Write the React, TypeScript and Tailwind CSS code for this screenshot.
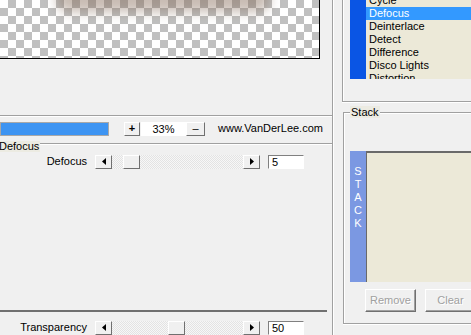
import React from "react";

const raised =
  "border border-t-white border-l-white border-r-[#707070] border-b-[#707070] bg-[#f0f0f0]";
const sunken =
  "border border-t-[#808080] border-l-[#808080] border-r-white border-b-white bg-white";

const effects = [
  "Cycle",
  "Defocus",
  "Deinterlace",
  "Detect",
  "Difference",
  "Disco Lights",
  "Distortion",
];

function ArrowButton({ dir }: { dir: "left" | "right" }) {
  return (
    <div className={`${raised} w-[17px] h-[14px] flex items-center justify-center shrink-0`}>
      <svg width="4" height="7" viewBox="0 0 4 7">
        {dir === "left" ? <path d="M4 0V7L0 3.5Z" fill="#000" /> : <path d="M0 0V7L4 3.5Z" fill="#000" />}
      </svg>
    </div>
  );
}

function SliderRow({ label, value, thumb }: { label: string; value: string; thumb: number }) {
  return (
    <div className="flex items-center h-[15px]">
      <div className="w-[88px] text-right pr-[1px] leading-none">{label}</div>
      <div className="ml-[7px] flex items-center">
        <ArrowButton dir="left" />
        <div className="w-[131px] h-[14px] flex items-center bg-[repeating-conic-gradient(#e3e3e3_0%_25%,#f7f7f7_0%_50%)] [background-size:2px_2px]">
          <div className={`${raised} h-[14px] w-[17px]`} style={{ marginLeft: thumb }} />
        </div>
        <ArrowButton dir="right" />
      </div>
      <div className={`${sunken} ml-[8px] w-[36px] h-[14px] pl-[3px] leading-[12px]`}>{value}</div>
    </div>
  );
}

const App: React.FC = () => {
  return (
    <div className="w-[471px] h-[335px] overflow-hidden bg-[#f0f0f0] flex text-[11px] text-black font-['Liberation_Sans',Arial,sans-serif]">
      {/* left side: preview + settings */}
      <div className="w-[333px] shrink-0 border-r border-[#a0a0a0] flex flex-col">
        <div className="h-[116px] shrink-0 border-b border-[#a0a0a0] shadow-[0_1px_0_#fff]">
          <div className="relative w-[320px] h-[59px] overflow-hidden border-r border-b border-black bg-[repeating-conic-gradient(#c0c0c0_0%_25%,#ffffff_0%_50%)] [background-size:16px_16px]">
            {/* blurred shadow of the preview */}
            <div className="absolute left-[56px] top-[-14px] w-[214px] h-[26px] rounded-full bg-[rgba(125,95,75,0.42)] blur-[6px]" />
          </div>
        </div>

        {/* zoom toolbar */}
        <div className="mt-[5px] h-[15px] flex items-center">
          <div className="w-[109px] h-[14px] bg-[#3d94f2] border border-[#a8a8a8]" />
          <div className={`${raised} ml-[15px] w-[16px] h-[14px] flex items-center justify-center font-bold leading-none`}>+</div>
          <div className="ml-[1px] w-[45px] h-[14px] bg-white text-center leading-[14px]">33%</div>
          <div className={`${raised} w-[19px] h-[14px] flex items-center justify-center leading-none`}>–</div>
          <div className="ml-[13px] leading-none">www.VanDerLee.com</div>
        </div>

        {/* effect settings */}
        <div className="relative mt-[7px] flex-1 border-t border-[#a0a0a0] shadow-[inset_0_1px_0_#fff]">
          <div className="absolute left-[-2px] top-[-3px] px-[1px] h-[11px] leading-[11px] bg-[#ecebe2]">Defocus</div>
          <div className="mt-[10px]">
            <SliderRow label="Defocus" value="5" thumb={11} />
          </div>
          <div className="mt-[141px] w-[327px] h-[2px] bg-[#707070]" />
          <div className="mt-[8px]">
            <SliderRow label="Transparency" value="50" thumb={56} />
          </div>
        </div>
      </div>

      {/* right side: effect list + stack */}
      <div className="flex-1 border-l border-white flex flex-col">
        <div className="ml-[8px] h-[102px] shrink-0 border-l border-b border-[#a0a0a0] shadow-[inset_1px_0_0_#fff,0_1px_0_#fff]">
          <div className="ml-[7px] h-[79px] flex overflow-hidden">
            <div className="w-[16px] bg-[#0a55e4]" />
            <div className="flex-1 bg-[#ece9d8] mt-[-6px]">
              {effects.map((item, index) => (
                <div
                  key={index}
                  className={`h-[13px] leading-[13px] pl-[3px] whitespace-nowrap ${
                    item === "Defocus" ? "bg-[#3399ff] text-white" : ""
                  }`}
                >
                  {item}
                </div>
              ))}
            </div>
          </div>
        </div>

        <div className="relative mt-[10px] ml-[9px] h-[212px] shrink-0 border-l border-t border-b border-[#a0a0a0] shadow-[inset_1px_1px_0_#fff,0_1px_0_#fff]">
          <div className="absolute left-[6px] top-[-7px] px-[1px] h-[12px] leading-[12px] bg-[#ecebe2]">Stack</div>
          <div className="mt-[38px] ml-[6px] h-[131px] flex">
            <div className="w-[16px] bg-[#7b98e2] flex flex-col items-center pt-[14px] text-white">
              {"STACK".split("").map((c, i) => (
                <div key={i} className="h-[13px] leading-[13px]">
                  {c}
                </div>
              ))}
            </div>
            <div className="flex-1 bg-[#ece9d8] border-t-2 border-l border-t-[#6a6a6a] border-l-[#6a6a6a]" />
          </div>
          <div className="mt-[7px] ml-[21px] flex gap-[9px]">
            {["Remove", "Clear"].map((b) => (
              <div
                key={b}
                className={`${raised} w-[51px] h-[23px] shrink-0 flex items-center justify-center text-[#a0a0a0] [text-shadow:1px_1px_0_#fff] shadow-[inset_-1px_-1px_0_#a0a0a0]`}
              >
                {b}
              </div>
            ))}
          </div>
        </div>
      </div>
    </div>
  );
};

export default App;
